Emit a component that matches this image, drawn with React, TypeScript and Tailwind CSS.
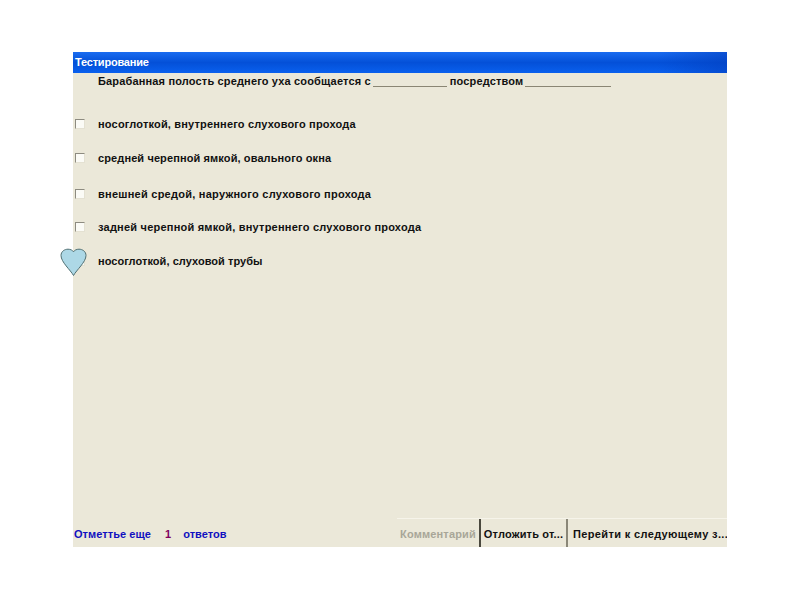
import React from 'react';

const font = { fontFamily: '"Liberation Sans", Arial, sans-serif' };

const answers = [
  { text: 'носоглоткой, внутреннего слухового прохода', cls: 'mt-[27px] tracking-[0.18px]' },
  { text: 'средней черепной ямкой, овального окна', cls: 'mt-[18px] tracking-[0.11px]' },
  { text: 'внешней средой, наружного слухового прохода', cls: 'mt-[20px] tracking-[0.25px]' },
  { text: 'задней черепной ямкой, внутреннего слухового прохода', cls: 'mt-[17px] tracking-[0.22px]' },
  { text: 'носоглоткой, слуховой трубы', cls: 'mt-[18px] tracking-[0.05px]' },
];

const Blank: React.FC<{ width: string }> = ({ width }) => (
  <span className={`inline-block h-[11px] border-b border-[#8a8674] ${width}`}></span>
);

const App: React.FC = () => {
  return (
    <div className="w-[800px] h-[600px] bg-white pt-[52px] pl-[73px]">
      <div className="relative w-[654px] h-[495px] flex flex-col bg-[#ebe8d9] text-[11px] font-bold tracking-[0.16px] text-[#111] whitespace-nowrap" style={font}>
        <div className="h-[21px] shrink-0 flex items-center pl-[2px] text-white tracking-[-0.2px] bg-gradient-to-b from-[#1a6cf0] via-[#0450d8] to-[#0a60ee]">
          <div className="absolute top-0 right-0 w-[70px] h-[21px] bg-gradient-to-r from-transparent to-[#0340c0]/60"></div>
          <span className="relative">Тестирование</span>
        </div>

        <div className="flex items-center h-[16px] pl-[25px]">
          <span>Барабанная полость среднего уха сообщается с</span>
          <Blank width="w-[74px] ml-[2px]" />
          <span className="ml-[3px]">посредством</span>
          <Blank width="w-[86px] ml-[2px]" />
        </div>

        {answers.map(a => (
          <div key={a.text} className={`flex items-center h-[16px] ${a.cls}`}>
            <span className="w-[10px] h-[10px] ml-[2px] bg-[#fbfbf6] border border-[#e4e1d2] border-t-[#8d8b80] border-l-[#8d8b80]"></span>
            <span className="ml-[13px]">{a.text}</span>
          </div>
        ))}

        <div className="mt-auto h-[29px] flex">
          <div className="flex items-center pl-[1px] pt-[3px] text-[#1010c0]">
            <span className="tracking-[0.05px]">Отметтье еще</span>
            <span className="ml-[14px] text-[#800060]">1</span>
            <span className="ml-[12px] tracking-[0.05px]">ответов</span>
          </div>
          <div className="ml-auto flex h-[29px] border-t border-[#f6f4ea]">
            <div className="w-[84px] flex items-center justify-center pt-[3px] text-[#a8a698] border-r-2 border-[#4a483e]">Комментарий</div>
            <div className="w-[87px] flex items-center justify-center pt-[3px] border-r-2 border-[#8a8778]">Отложить от...</div>
            <div className="w-[159px] flex items-center pl-[5px] pt-[3px] tracking-[0.36px] overflow-hidden">Перейти к следующему з...</div>
          </div>
        </div>

        <svg className="absolute left-[-13px] top-[196px]" width="27" height="29" viewBox="0 0 27 29">
          <path d="M13.5 27.5 C10.5 22 1 14 1 7.5 C1 3.5 4.5 1.2 8 1.2 C10.5 1.2 12.5 2.2 13.5 3.8 C14.5 2.2 16.5 1.2 19 1.2 C22.5 1.2 26 3.5 26 7.5 C26 14 16.5 22 13.5 27.5 Z" fill="#add8e6" stroke="#4f6f72" strokeWidth="1" />
        </svg>
      </div>
    </div>
  );
};

export default App;
